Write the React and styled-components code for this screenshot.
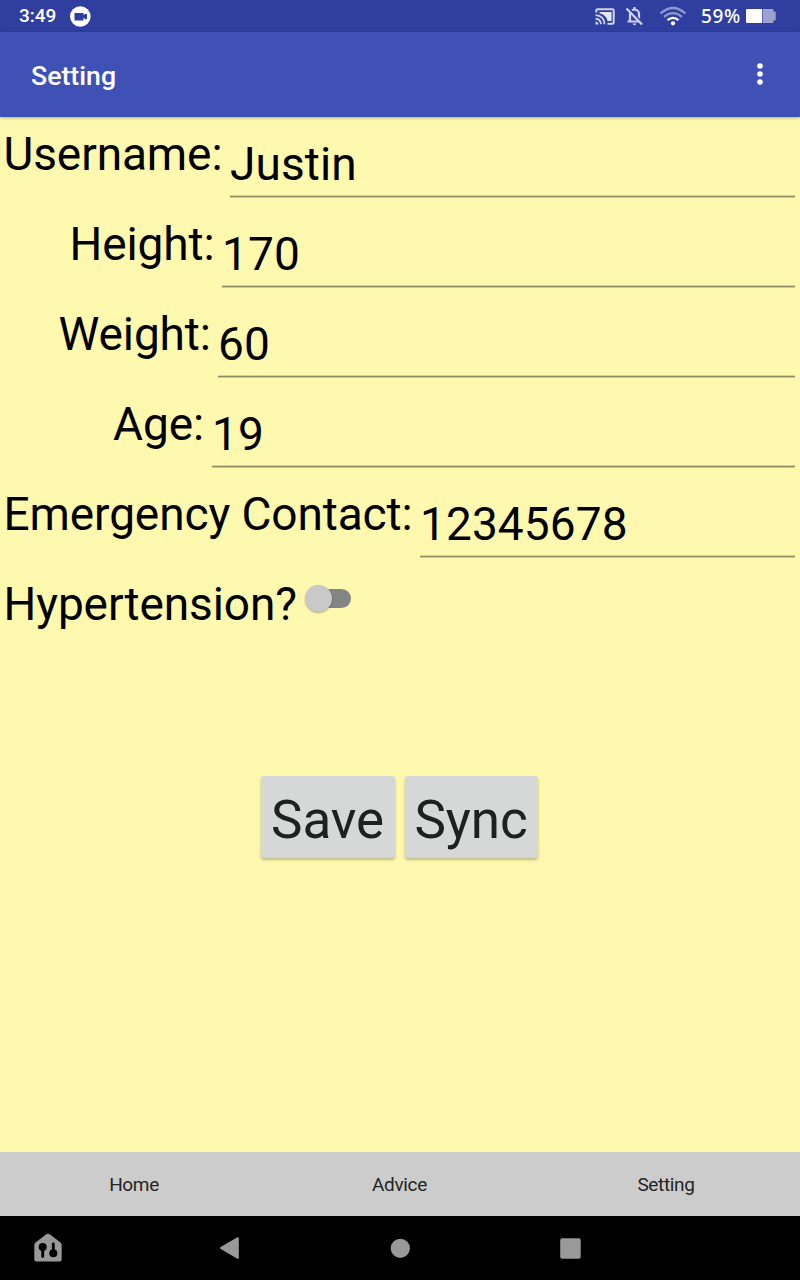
import React from "react";
import styled, { createGlobalStyle } from "styled-components";

const Global = createGlobalStyle`
  *{box-sizing:border-box}
  body{margin:0;font-family:Roboto,sans-serif;background:#fff8af;color:#000}
`;
const Screen = styled.div`display:flex;flex-direction:column;width:800px;height:1280px;overflow:hidden;`;
const StatusBar = styled.header`height:32px;flex:none;background:#303f9f;color:#fff;display:flex;align-items:center;padding:0 24px 0 19px;`;
const Clock = styled.span`font:500 19px/32px Roboto,sans-serif;width:51px;`;
const StatusIcons = styled.div`margin-left:auto;display:flex;align-items:center;`;
const StatusIcon = styled.svg`display:block;margin-right:${p => p.$gap || 0}px;`;
const Battery = styled.span`font:500 19px/32px "Noto Sans",sans-serif;letter-spacing:.6px;width:45px;white-space:nowrap;`;
const AppBar = styled.div`height:85px;flex:none;background:#3f51b5;color:#fff;display:flex;align-items:center;justify-content:space-between;padding:0 32px 0 31px;z-index:1;box-shadow:0 1px 3px rgba(0,0,0,.3);`;
const Title = styled.h1`margin:3px 0 0;font:500 26.7px/32px Roboto,sans-serif;`;
const Form = styled.main`flex:1;background:#fff8af;display:flex;flex-direction:column;`;
const Field = styled.label`display:flex;height:90px;padding-right:5px;`;
const Label = styled.span`font-size:46px;line-height:56px;letter-spacing:-.1px;padding-top:9px;padding-left:${p => p.$indent}px;width:${p => p.$width}px;flex:none;white-space:nowrap;`;
const Value = styled.span`flex:1;height:80px;padding-top:19px;font-size:46px;line-height:56px;letter-spacing:.1px;border-bottom:1px solid #8f8b62;box-shadow:0 1px #d0ca8f,inset 0 -1px #d8d296;`;
const Toggle = styled.span`display:flex;align-items:center;width:42px;height:19px;border-radius:10px;background:#858585;margin-top:22px;`;
const Thumb = styled.span`width:27px;height:27px;border-radius:50%;background:#c9c9c9;margin-left:-4px;flex:none;box-shadow:0 1px 2px rgba(0,0,0,.3);`;
const Actions = styled.div`display:flex;justify-content:center;gap:10px;margin-top:119px;padding-right:1px;`;
const Button = styled.button`width:${p => p.$width}px;height:82px;padding:6px 1px 0 0;border:0;border-radius:3px;background:#d6d7d7;color:#202020;font:400 53px/64px Roboto,sans-serif;letter-spacing:-.1px;box-shadow:0 2px 3px rgba(0,0,0,.25);`;
const Tabs = styled.nav`height:64px;flex:none;background:#ccc;display:grid;grid-template-columns:267px 264px 269px;`;
const Tab = styled.span`display:flex;align-items:center;justify-content:center;padding-left:1px;font-size:19px;letter-spacing:-.35px;color:#242424;`;
const NavBar = styled.footer`height:64px;flex:none;background:#000;display:flex;align-items:center;padding-left:33px;`;
const NavIcon = styled.svg`display:block;margin-right:${p => p.$gap || 0}px;`;

const fields = [
  ["Username:", "Justin", 3.5, 230],
  ["Height:", "170", 69.5, 222],
  ["Weight:", "60", 58.5, 218],
  ["Age:", "19", 113, 212],
  ["Emergency Contact:", "12345678", 3.5, 420],
];

export default function App() {
  return <Screen><Global />
    <StatusBar>
      <Clock>3:49</Clock>
      <StatusIcon width="21" height="21" viewBox="0 0 21 21"><circle cx="10.3" cy="10.5" r="10.3" fill="#fff"/><path d="M4.5 7h9v1.8h1V8H17v5.3h-2.5V12h-1v2.4h-9z" fill="#303f9f"/></StatusIcon>
      <StatusIcons>
        <StatusIcon $gap={10} width="20" height="17" viewBox="0 0 20 17"><path d="M1.3 4.5V2.5q0-1.2 1.2-1.2h15q1.2 0 1.2 1.2v12q0 1.2-1.2 1.2h-5" fill="none" stroke="#d0d4ee" strokeWidth="2"/><path d="M4.5 4h12v9h-4C11.8 9 8.5 6.2 4.5 5.3z" fill="#e5e8f6"/><path d="M.5 7.2q8.5.4 9 9M.5 10.7q5 .5 5.5 5.5" fill="none" stroke="#d0d4ee" strokeWidth="1.8"/><path d="M.5 13.5v3h3q0-2.5-3-3z" fill="#d0d4ee"/></StatusIcon>
        <StatusIcon $gap={14} width="20" height="20" viewBox="0 0 20 20" fill="none" stroke="#d0d4ee" strokeWidth="2.2"><path d="M5 15V8q.5-4 4.5-4.5Q13.8 4 14 8v7M2.5 15.5h14M9.5 1v2"/><path d="M3 2l15 16.5" stroke="#303f9f" strokeWidth="3"/><path d="M1.5 2.5l15.5 16"/><path d="M7.5 17.5h4q-.5 1.7-2 1.7t-2-1.7z" fill="#d0d4ee" stroke="none"/></StatusIcon>
        <StatusIcon $gap={14} width="28" height="20" viewBox="0 0 28 20" fill="none" stroke="#fff" strokeWidth="2.2"><path d="M1.5 7.5Q14-3.5 26.5 7.5M5 10.8q9-7.5 18 0" stroke="#8f98cf"/><path d="M8.5 14.2q5.5-4.5 11 0"/><circle cx="14" cy="17.3" r="2.1" fill="#fff" stroke="none"/></StatusIcon>
        <Battery>59%</Battery>
        <StatusIcon width="30" height="14" viewBox="0 0 30 14"><path d="M1.2 0H16v14H1.2Q0 14 0 12.8V1.2Q0 0 1.2 0z" fill="#fff"/><path d="M16.6 0h9.9q1 0 1 1v1.5h1.2q1 0 1 1v7q0 1-1 1h-1.2V13q0 1-1 1h-9.9z" fill="#9ba3d0"/></StatusIcon>
      </StatusIcons>
    </StatusBar>
    <AppBar><Title>Setting</Title><svg width="16" height="26" viewBox="0 0 16 26" fill="#fff"><circle cx="8" cy="4" r="2.8"/><circle cx="8" cy="12" r="2.8"/><circle cx="8" cy="20" r="2.8"/></svg></AppBar>
    <Form>
      {fields.map(([name, value, indent, width]) => <Field key={name}><Label $indent={indent} $width={width}>{name}</Label><Value>{value}</Value></Field>)}
      <Field><Label $indent={3.5} $width={309}>Hypertension?</Label><Toggle><Thumb/></Toggle></Field>
      <Actions><Button $width={134}>Save</Button><Button $width={133}>Sync</Button></Actions>
    </Form>
    <Tabs><Tab>Home</Tab><Tab>Advice</Tab><Tab>Setting</Tab></Tabs>
    <NavBar>
      <NavIcon $gap={157} width="30" height="30" viewBox="0 0 30 30"><path d="M1.3 12q0-1.5 1.2-2.5L13 1.5q2-1.5 4 0l10.5 8q1.2 1 1.2 2.5v14.5q0 2-2 2H3.3q-2 0-2-2z" fill="#999"/><path d="M9.7 14v9.5M20.3 11v10" stroke="#000" strokeWidth="2.8" strokeLinecap="round"/><circle cx="9.7" cy="14" r="4"/><circle cx="20.3" cy="20.3" r="4"/></NavIcon>
      <NavIcon $gap={151} width="19" height="22" viewBox="0 0 19 22" fill="#999"><path d="M.7 10L17 .5q1.8-1 1.8 1v19q0 2-1.8 1L.7 12q-1.3-1 0-2z"/></NavIcon>
      <NavIcon $gap={150} width="20" height="20" viewBox="0 0 20 20" fill="#999"><circle cx="10.3" cy="10.3" r="9.6"/></NavIcon>
      <NavIcon width="21" height="21" viewBox="0 0 21 21" fill="#999"><rect x=".2" y=".2" width="20.5" height="20.5" rx="2"/></NavIcon>
    </NavBar>
  </Screen>;
}
